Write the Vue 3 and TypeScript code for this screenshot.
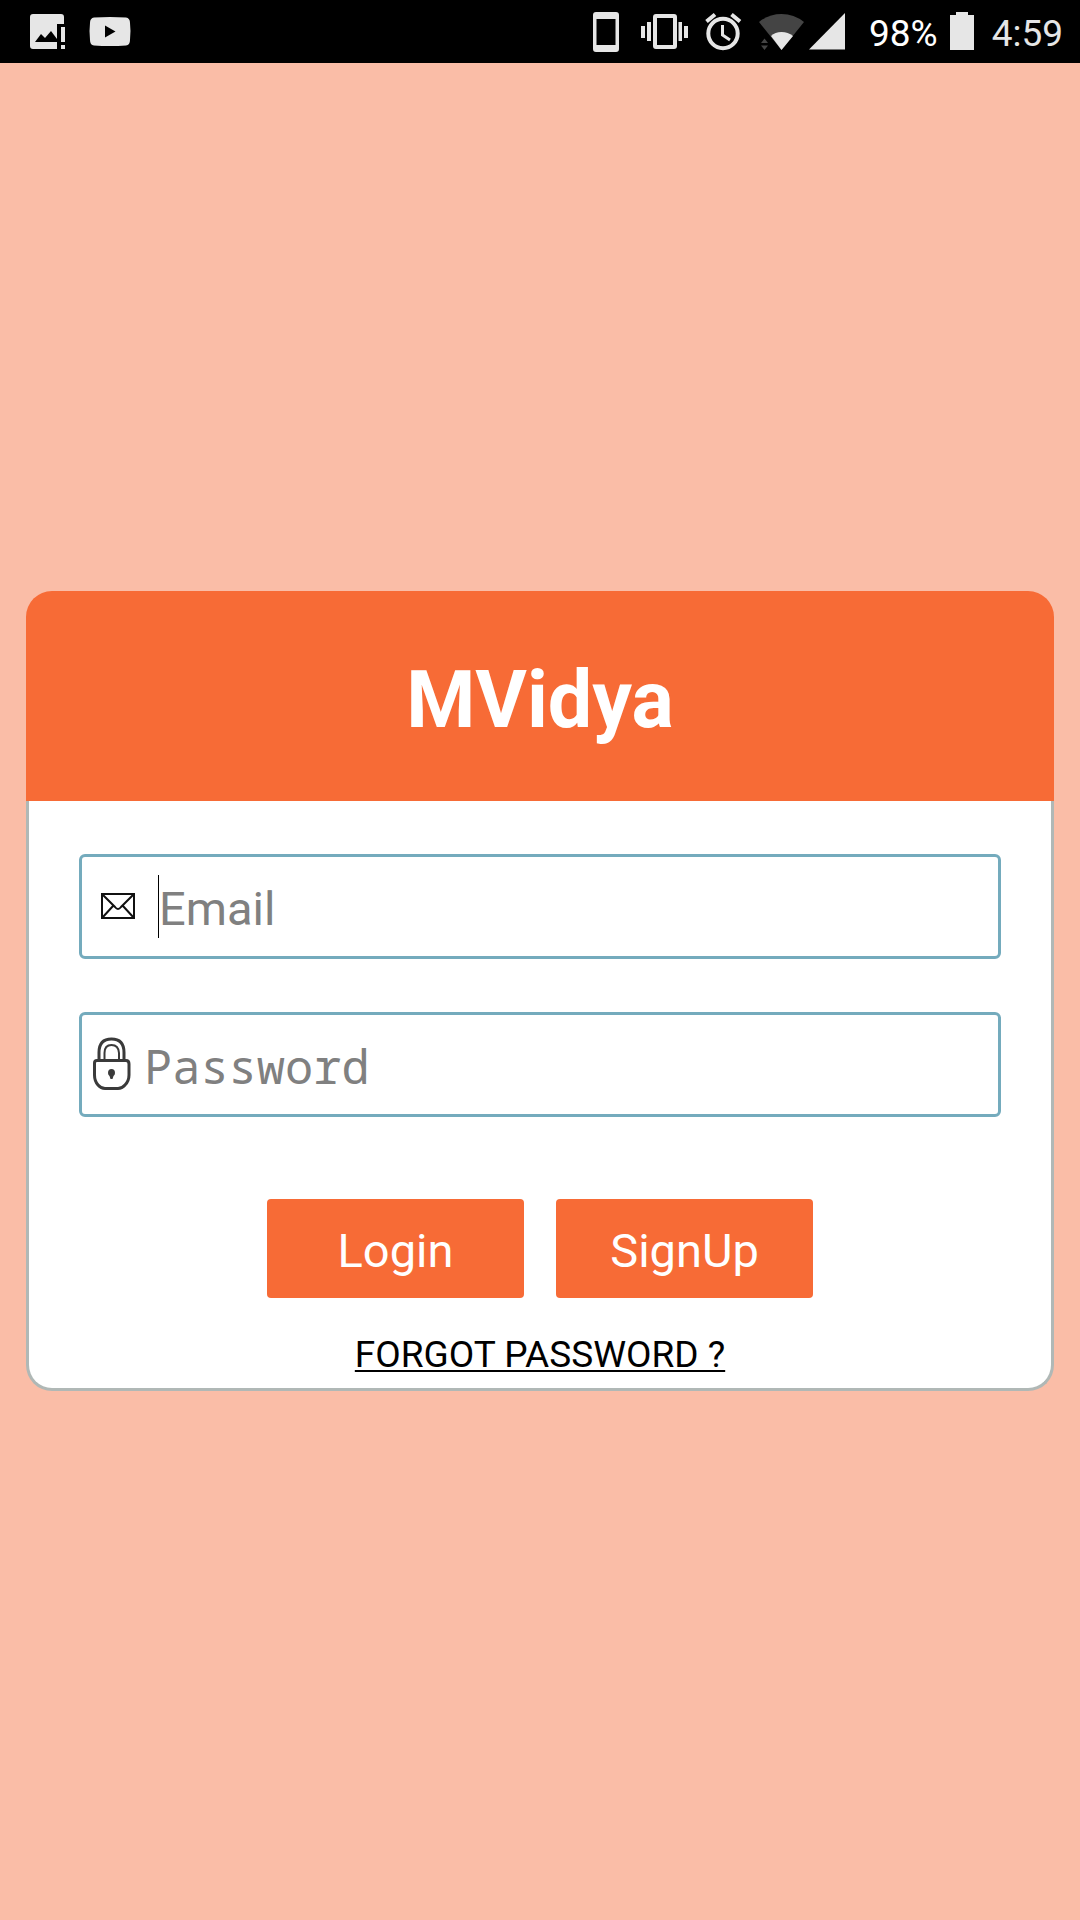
<script setup lang="ts">
import { ref } from 'vue'

const email = ref('')
const password = ref('')
const battery = '98%'
const time = '4:59'
</script>

<template>
  <div class="screen">
    <header class="status">
      <div class="notifications">
        <svg width="35" height="63" viewBox="0 0 35 63" aria-hidden="true">
          <path fill="#e6e6e6" d="M3 14H31Q34 14 34 17V24H27V49H3Q0 49 0 46V17Q0 14 3 14Z" />
          <path fill="#000" d="M5 42L11 34L15 38L21 31L27 39V42Z" />
          <path fill="#e6e6e6" d="M31 27H35V42H31ZM31 45H35V49H31Z" />
        </svg>
        <svg width="42" height="63" viewBox="0 0 42 63" aria-hidden="true">
          <path fill="#e6e6e6" d="M5 17.500Q21 16.500 37 17.500Q41 18 41 23Q42 31 41 40Q41 45 37 45.500Q21 46.500 5 45.500Q1 45 1 40Q0 31 1 23Q1 18 5 17.500Z" />
          <path fill="#000" d="M16 25.500L26.500 31.500L16 37.500Z" />
        </svg>
      </div>
      <div class="system">
        <svg width="36" height="63" viewBox="0 0 36 63" aria-hidden="true">
          <path fill="#e6e6e6" fill-rule="evenodd" d="M3 12H23Q26 12 26 15V49Q26 52 23 52H3Q0 52 0 49V15Q0 12 3 12ZM3.500 19V45H22.500V19Z" />
        </svg>
        <svg width="52" height="63" viewBox="0 0 52 63" aria-hidden="true">
          <path fill="#e6e6e6" fill-rule="evenodd" d="M15 14H33Q36 14 36 17V46Q36 49 33 49H15Q12 49 12 46V17Q12 14 15 14ZM16 18V45H32V18Z" />
          <path fill="#e6e6e6" d="M0 26H4V38H0ZM6 22H10V41H6ZM37.500 22H41V41H37.500ZM43 26H47V38H43Z" />
        </svg>
        <svg width="42" height="63" viewBox="0 0 42 63" fill="none" stroke="#e6e6e6" aria-hidden="true">
          <circle cx="18" cy="33.500" r="14.700" stroke-width="4" />
          <path stroke-width="3" d="M17.500 25V35L25 40" />
          <path stroke-width="4" d="M1.500 21.500L10 14.500M26.500 14.500L35 21.500" />
        </svg>
        <div class="network">
          <svg width="45" height="63" viewBox="0 0 45 63" aria-hidden="true">
            <path fill="#444" d="M22.500 50L0 22Q10 14 22.500 14T45 22Z" />
            <path fill="#e6e6e6" d="M22.500 50L12 36Q16 32 22.500 32T34 36Z" />
            <path fill="#444" d="M2 43L5.500 38.500L9 43ZM2 45.500H9L5.500 50Z" />
          </svg>
          <svg width="48" height="63" viewBox="0 0 48 63" aria-hidden="true">
            <path fill="#e6e6e6" d="M0 49.500L36 13V49.500Z" />
          </svg>
        </div>
        <span class="level">{{ battery }}</span>
        <svg width="30" height="63" viewBox="0 0 30 63" aria-hidden="true">
          <path fill="#e6e6e6" d="M0 15H6V12H18V15H24V50H0Z" />
        </svg>
        <time class="clock">{{ time }}</time>
      </div>
    </header>

    <main class="content">
      <form class="card" @submit.prevent>
        <h1 class="title">MVidya</h1>
        <div class="body">
          <label class="field email">
            <svg width="34" height="26" viewBox="0 0 34 26" fill="none" stroke="#111" stroke-width="2" aria-hidden="true">
              <path d="M1 1H33V25H1ZM1 1L14 14Q17 18 20 14L33 1M1 25L12 13M33 25L22 13" />
            </svg>
            <span class="caret"></span>
            <input v-model="email" type="email" placeholder="Email" aria-label="Email" />
          </label>
          <label class="field password">
            <svg width="38" height="54" viewBox="0 0 38 54" fill="none" stroke="#3a3a3a" aria-hidden="true">
              <path stroke-width="3" d="M6 23V15.500Q6 2 18.500 2T31 15.500V23" />
              <path stroke-width="2" d="M11.500 23V16Q11.500 8 18.500 8T26 16V23" />
              <path stroke-width="3" d="M4 23.500H33Q36 23.500 36 27V38Q36 44 32 48Q29 51.500 25 51.500H12Q8 51.500 5 48Q1.500 44 1.500 38V26Q1.500 23.500 4 23.500Z" />
              <path fill="#3a3a3a" stroke="none" d="M18.500 32Q22 32 22 36Q22 38 20.500 39L19.500 42H17.500L16.500 39Q15 38 15 36Q15 32 18.500 32Z" />
            </svg>
            <input v-model="password" type="password" placeholder="Password" aria-label="Password" />
          </label>
          <div class="actions">
            <button type="submit">Login</button>
            <button type="button">SignUp</button>
          </div>
          <a class="forgot" href="#">FORGOT PASSWORD ?</a>
        </div>
      </form>
    </main>
  </div>
</template>

<style>
body {
  margin: 0;
  background: #fabda7;
}
</style>

<style scoped>
.screen {
  display: flex;
  flex-direction: column;
  min-height: 100vh;
  background: #fabda7;
  font-family: Roboto, "Liberation Sans", sans-serif;
}

svg {
  display: block;
  flex: none;
}

.status {
  display: flex;
  justify-content: space-between;
  height: 63px;
  padding: 0 17px 0 30px;
  background: #000;
  color: #e6e6e6;
}

.notifications {
  display: flex;
  gap: 24px;
}

.system {
  display: flex;
  gap: 12px;
  font-size: 37px;
  line-height: 67px;
}

.network {
  display: flex;
  gap: 5px;
}

.level {
  color: #fff;
}

.content {
  flex: 1;
  display: flex;
  flex-direction: column;
  justify-content: center;
  padding: 0 26px 2px;
}

.card {
  border-radius: 26px;
}

.title {
  box-sizing: border-box;
  margin: 0;
  padding-top: 8px;
  border-radius: 26px 26px 0 0;
  background: #f76b36;
  color: #fff;
  font-size: 79px;
  font-weight: 700;
  line-height: 202px;
  text-align: center;
}

.body {
  display: flex;
  flex-direction: column;
  padding: 53px 50px 12px;
  border: 3px solid #b0b8b6;
  border-top: 0;
  border-radius: 0 0 26px 26px;
  background: #fff;
}

.field {
  box-sizing: border-box;
  display: flex;
  align-items: center;
  height: 105px;
  border: 3px solid #74abbd;
  border-radius: 6px;
}

.email {
  padding-left: 19px;
}

.password {
  margin-top: 53px;
  padding-left: 11px;
}

.caret {
  width: 1px;
  height: 63px;
  margin-left: 23px;
  background: #000;
}

.field input {
  flex: 1;
  min-width: 0;
  height: 100%;
  box-sizing: border-box;
  margin: 0;
  padding: 4px 0 0;
  border: 0;
  outline: 0;
  background: transparent;
  color: #222;
  font-family: inherit;
  font-size: 47px;
}

.field input::placeholder {
  color: #808080;
  opacity: 1;
}

.password input {
  margin-left: 13px;
  font-family: "Noto Sans Mono", "DejaVu Sans Mono", monospace;
}

.actions {
  display: flex;
  justify-content: center;
  gap: 32px;
  margin-top: 82px;
}

.actions button {
  width: 257px;
  height: 99px;
  padding: 4px 0 0;
  border: 0;
  border-radius: 4px;
  background: #f76b36;
  color: #fff;
  font-family: inherit;
  font-size: 47px;
}

.forgot {
  align-self: center;
  margin-top: 36px;
  color: #000;
  font-size: 37px;
  line-height: 42px;
  text-decoration: underline;
  text-decoration-thickness: 2px;
  text-decoration-skip-ink: none;
  text-underline-offset: 3px;
}
</style>
